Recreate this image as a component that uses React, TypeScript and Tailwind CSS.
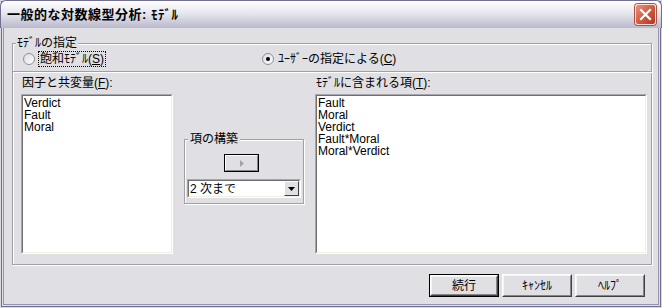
import React from 'react';

const FONT = '"Liberation Sans", "Noto Sans CJK JP", sans-serif';

function Etched({ className = '' }: { className?: string }) {
  return <div className={`border border-[#a09fa5] shadow-[inset_1px_1px_0_#ffffff,1px_1px_0_#ffffff] ${className}`} />;
}

function Sunken({ className = '', children }: { className?: string; children?: React.ReactNode }) {
  return (
    <div className={`border border-t-[#a7a6aa] border-l-[#a7a6aa] border-b-white border-r-white ${className}`}>
      <div className="h-full w-full border border-t-[#6f6e72] border-l-[#6f6e72] border-b-[#f1efe2] border-r-[#f1efe2] bg-white">
        {children}
      </div>
    </div>
  );
}

function Key({ k }: { k: string }) {
  return (
    <>
      (<span className="underline underline-offset-1">{k}</span>)
    </>
  );
}

function Radio({ checked }: { checked?: boolean }) {
  return (
    <span className="flex h-[12px] w-[12px] items-center justify-center rounded-full border border-[#8e8e98] bg-gradient-to-br from-[#dcdce2] to-white">
      {checked && <span className="h-[4px] w-[4px] rounded-full bg-black" />}
    </span>
  );
}

function Button({ label, isDefault }: { label: string; isDefault?: boolean }) {
  return (
    <div className={`h-[23px] w-[70px] ${isDefault ? 'border border-black' : ''}`}>
      <div className="h-full w-full border border-t-white border-l-white border-b-[#404040] border-r-[#404040]">
        <div className="flex h-full w-full items-center justify-center border border-t-[#f4f4f6] border-l-[#f4f4f6] border-b-[#86858b] border-r-[#86858b] bg-[#e0dfe3] text-[12px] text-black">
          {label}
        </div>
      </div>
    </div>
  );
}

export default function App() {
  return (
    <div
      className="relative flex h-[308px] w-[662px] flex-col overflow-hidden bg-[#e0dfe3] text-[12px] leading-[12px] text-black shadow-[inset_0_0_0_1px_#d8d8e0,inset_0_0_0_2px_#706f90,inset_0_0_0_3px_#e0dfe3,inset_0_0_0_4px_#9494ac]"
      style={{ fontFamily: FONT }}
    >
      {/* title bar */}
      <div className="flex h-[28px] items-center justify-between rounded-t-[6px] border border-b-0 border-[#706f90] bg-gradient-to-b from-white via-[#e3e3ec] to-[#b9b9cc] pl-[6px] pr-[5px]">
        <span className="text-[13px] font-bold tracking-[0.5px]">一般的な対数線型分析: ﾓﾃﾞﾙ</span>
        <span className="flex h-[21px] w-[21px] items-center justify-center rounded-[3px] border border-[#fbe3dc] bg-gradient-to-br from-[#e9927e] via-[#d45a42] to-[#b7341f] shadow-[0_0_0_1px_#a25547]">
          <svg width="13" height="13" viewBox="0 0 13 13">
            <path d="M2 2 L11 11 M11 2 L2 11" stroke="white" strokeWidth="2.2" strokeLinecap="square" />
          </svg>
        </span>
      </div>

      {/* body */}
      <div className="flex flex-1 flex-col px-[12px] pb-[11px] pt-[15px]">
        <div className="relative flex h-[222px] w-[640px] flex-col border border-[#a09fa5] shadow-[inset_1px_1px_0_#ffffff,1px_1px_0_#ffffff]">
          <span className="absolute -top-[7px] left-[3px] bg-[#e0dfe3] px-[1px]">ﾓﾃﾞﾙの指定</span>

          {/* radio row */}
          <div className="flex h-[27px] items-center pl-[10px] pt-[3px]">
            <span className="flex w-[239px] items-center">
              <Radio />
              <span className="ml-[3px] border border-dotted border-black px-[1px] py-[1px]">
                飽和ﾓﾃﾞﾙ<Key k="S" />
              </span>
            </span>
            <span className="flex items-center">
              <Radio checked />
              <span className="ml-[4px]">
                ﾕｰｻﾞｰの指定による<Key k="C" />
              </span>
            </span>
          </div>

          <Etched className="-ml-[1px] w-[640px] border-x-0 border-b-0" />

          {/* lists */}
          <div className="flex pl-[8px]">
            <div className="flex w-[152px] flex-col">
              <div className="flex h-[22px] items-center pl-[1px]">
                因子と共変量<Key k="F" />:
              </div>
              <Sunken className="h-[160px] w-[152px]">
                <div className="pl-[1px] pt-[1px]">
                  <div>Verdict</div>
                  <div>Fault</div>
                  <div>Moral</div>
                </div>
              </Sunken>
            </div>

            <div className="relative ml-[11px] mt-[67px] h-[65px] w-[120px] border border-[#a09fa5] shadow-[inset_1px_1px_0_#ffffff,1px_1px_0_#ffffff]">
              <span className="absolute -top-[7px] left-[3px] bg-[#e0dfe3] px-[2px]">項の構築</span>
              <div className="ml-[39px] mt-[14px] h-[18px] w-[35px] border border-black">
                <div className="flex h-full w-full items-center justify-center border border-t-white border-l-white border-b-[#86858b] border-r-[#86858b] bg-[#e0dfe3]">
                  <svg width="4" height="7" viewBox="0 0 4 7">
                    <path d="M0 0 L4 3.5 L0 7 Z" fill="#a3a2a8" />
                  </svg>
                </div>
              </div>
              <Sunken className="ml-[2px] mt-[7px] h-[19px] w-[114px]">
                <div className="flex h-full items-center justify-between">
                  <span className="pl-[1px]">2 次まで</span>
                  <span className="flex h-[15px] w-[15px] items-center justify-center border border-t-white border-l-white border-b-[#404040] border-r-[#404040] bg-[#e0dfe3]">
                    <svg width="7" height="4" viewBox="0 0 7 4">
                      <path d="M0 0 L7 0 L3.5 4 Z" fill="black" />
                    </svg>
                  </span>
                </div>
              </Sunken>
            </div>

            <div className="ml-[11px] flex w-[332px] flex-col">
              <div className="flex h-[22px] items-center pl-[1px]">
                ﾓﾃﾞﾙに含まれる項<Key k="T" />:
              </div>
              <Sunken className="h-[160px] w-[332px]">
                <div className="pl-[1px] pt-[1px]">
                  <div>Fault</div>
                  <div>Moral</div>
                  <div>Verdict</div>
                  <div>Fault*Moral</div>
                  <div>Moral*Verdict</div>
                </div>
              </Sunken>
            </div>
          </div>
        </div>

        {/* buttons */}
        <div className="mt-[9px] flex justify-end gap-[3px] pr-[5px]">
          <Button label="続行" isDefault />
          <Button label="ｷｬﾝｾﾙ" />
          <Button label="ﾍﾙﾌﾟ" />
        </div>
      </div>
    </div>
  );
}
